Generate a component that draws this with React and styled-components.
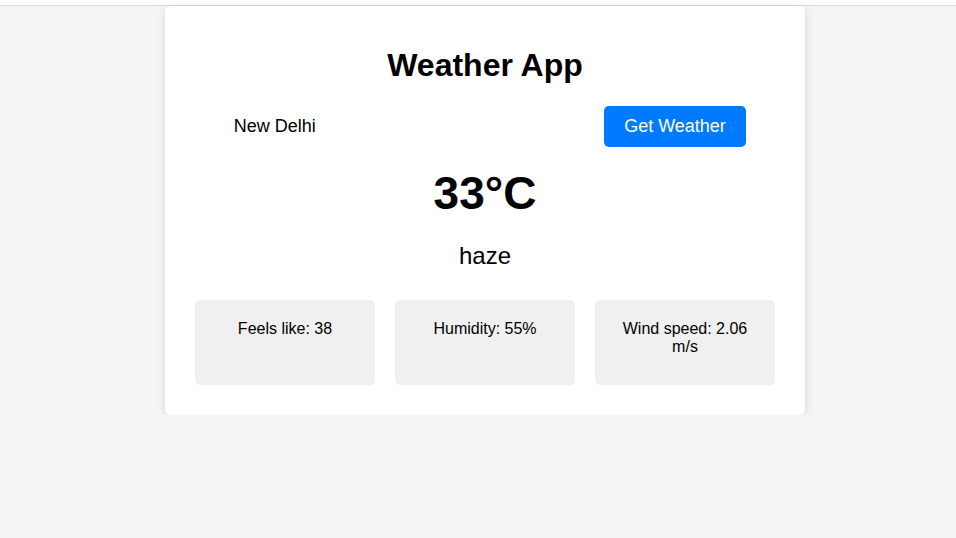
import React, { useState } from "react";
import styled, { createGlobalStyle } from "styled-components";

const GlobalStyle = createGlobalStyle`
  body {
    margin: 0;
    background: #f5f5f5;
    font-family: Arial, "Liberation Sans", sans-serif;
    color: #000;
  }
`;

const TopBar = styled.div`
  height: 5px;
  background: #fff;
  border-bottom: 1px solid #ddd;
`;

const Page = styled.div`
  display: flex;
  justify-content: center;
  padding-left: 14px;
`;

const Card = styled.div`
  width: 640px;
  box-sizing: border-box;
  padding: 20px 30px 30px;
  background: #fff;
  border-radius: 5px;
  box-shadow: 0 2px 10px rgba(0, 0, 0, 0.13);
  text-align: center;
`;

const Title = styled.h1`
  font-size: 32px;
  margin: 21px 0 22px;
`;

const SearchRow = styled.div`
  display: flex;
  justify-content: center;
  gap: 10px;
`;

const CityInput = styled.input`
  width: 370px;
  box-sizing: border-box;
  padding: 10px;
  border: none;
  outline: none;
  font-size: 18px;
  font-family: inherit;
  color: #000;
  background: transparent;
`;

const Button = styled.button`
  padding: 10px 20.5px;
  border: none;
  border-radius: 5px;
  background: #007bff;
  color: #fff;
  font-size: 18px;
  font-family: inherit;
  cursor: pointer;
`;

const Temp = styled.div`
  font-size: 46px;
  font-weight: bold;
  margin-top: 19px;
`;

const Description = styled.div`
  font-size: 24px;
  margin-top: 22px;
`;

const Details = styled.div`
  display: grid;
  grid-template-columns: repeat(3, 1fr);
  gap: 20px;
  margin-top: 30px;
`;

const Detail = styled.div`
  min-height: 85px;
  box-sizing: border-box;
  padding: 20px;
  background: #f0f0f0;
  border-radius: 5px;
  font-size: 16px;
`;

export default function App() {
  const [city, setCity] = useState("New Delhi");
  const details = ["Feels like: 38", "Humidity: 55%", "Wind speed: 2.06 m/s"];

  return (
    <>
      <GlobalStyle />
      <TopBar />
      <Page>
        <Card>
          <Title>Weather App</Title>
          <SearchRow>
            <CityInput value={city} onChange={(e) => setCity(e.target.value)} />
            <Button>Get Weather</Button>
          </SearchRow>
          <Temp>33°C</Temp>
          <Description>haze</Description>
          <Details>
            {details.map((d) => (
              <Detail key={d}>{d}</Detail>
            ))}
          </Details>
        </Card>
      </Page>
    </>
  );
}
